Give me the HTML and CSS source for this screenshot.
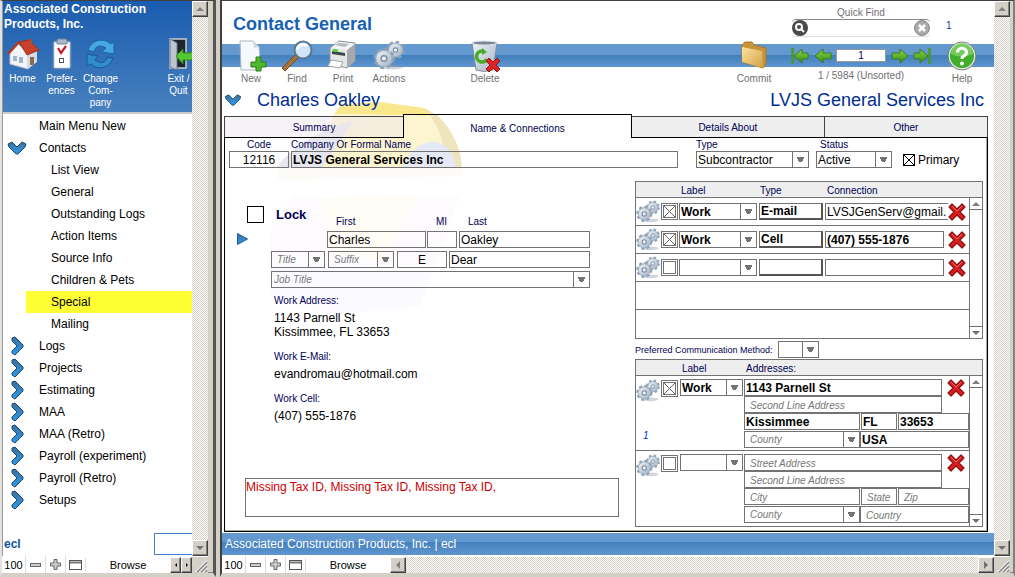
FILE: index.html
```html
<!DOCTYPE html>
<html lang="en">
<head>
    <meta charset="UTF-8">
    <meta name="viewport" content="width=device-width, initial-scale=1.0">
    <title>Contact General</title>
    <link rel="stylesheet" href="styles.css">
</head>
<body>
    <!-- shared icons -->
    <svg class="defs" width="0" height="0" aria-hidden="true">
        <defs>
            <linearGradient id="blue" x1="0" y1="0" x2="0" y2="1">
                <stop offset="0" stop-color="#3c6f9c"/>
                <stop offset="1" stop-color="#2f9be8"/>
            </linearGradient>
            <linearGradient id="green" x1="0" y1="0" x2="0" y2="1">
                <stop offset="0" stop-color="#8fd44a"/>
                <stop offset="1" stop-color="#2f8f10"/>
            </linearGradient>
            <linearGradient id="steel" x1="0" y1="0" x2="1" y2="1">
                <stop offset="0" stop-color="#eef2f6"/>
                <stop offset="1" stop-color="#a3b4c6"/>
            </linearGradient>
            <linearGradient id="gold" x1="0" y1="0" x2="1" y2="1">
                <stop offset="0" stop-color="#fbe3a0"/>
                <stop offset="1" stop-color="#d3a045"/>
            </linearGradient>
            <symbol id="chevron" viewBox="0 0 20 14">
                <path d="M1 3 L5 1 L10 6 L15 1 L19 3 L18 6 L11 13 L9 13 L2 6 Z" fill="url(#blue)" stroke="#1c4a78" stroke-width="1"/>
            </symbol>
            <symbol id="chevron-right" viewBox="0 0 14 20">
                <path d="M2 2 L5 1 L13 9 L13 11 L5 19 L2 17 L2 15 L7 10 L2 5 Z" fill="url(#blue)" stroke="#1c4a78" stroke-width="1"/>
            </symbol>
            <symbol id="gears" viewBox="0 0 32 32">
                <ellipse cx="19" cy="27" rx="11" ry="2.500" fill="#8a97a8" opacity=".4"/>
                <circle cx="22.500" cy="10" r="7.500" fill="#b4c3d2" stroke="#91a3b6" stroke-width="3.500" stroke-dasharray="3.200 2.690"/>
                <circle cx="22.500" cy="10" r="6.800" fill="url(#steel)" stroke="#9babbc" stroke-width=".8"/>
                <circle cx="22.500" cy="10" r="2.200" fill="#eef3f8" stroke="#7e91a5" stroke-width="1.200"/>
                <circle cx="11" cy="18.500" r="8.800" fill="#b4c3d2" stroke="#8fa1b4" stroke-width="3.800" stroke-dasharray="3.700 3.200"/>
                <circle cx="11" cy="18.500" r="8" fill="url(#steel)" stroke="#9babbc" stroke-width=".8"/>
                <circle cx="11" cy="18.500" r="2.800" fill="#eef3f8" stroke="#778b9f" stroke-width="1.400"/>
            </symbol>
            <symbol id="cross" viewBox="0 0 18 18">
                <path d="M4 1 L9 6 L14 1 L17 4 L12 9 L17 14 L14 17 L9 12 L4 17 L1 14 L6 9 L1 4 Z" fill="#d81e1e" stroke="#8c1212" stroke-width="1.2" stroke-linejoin="round"/>
                <path d="M4 3 L9 8 L14 3" fill="none" stroke="#f26a6a" stroke-width="1"/>
            </symbol>
            <symbol id="arrow" viewBox="0 0 18 16">
                <path d="M1 8 L9 1 L9 5 L17 5 L17 11 L9 11 L9 15 Z" fill="url(#green)" stroke="#3c7a24" stroke-width="1"/>
            </symbol>
            <symbol id="arrow-end" viewBox="0 0 18 16">
                <path d="M3 8 L11 1 L11 5 L17 5 L17 11 L11 11 L11 15 Z" fill="url(#green)" stroke="#3c7a24" stroke-width="1"/>
                <path d="M1.5 0 V16" stroke="#4a9a26" stroke-width="2.5"/>
            </symbol>
            <symbol id="minus" viewBox="0 0 11 11">
                <rect x=".5" y="4.5" width="10" height="3" fill="#ccc" stroke="#666"/>
            </symbol>
            <symbol id="plus" viewBox="0 0 11 11">
                <path d="M4 .5 H7 V4 H10.5 V7 H7 V10.5 H4 V7 H.5 V4 H4 Z" fill="#ccc" stroke="#666"/>
            </symbol>
            <symbol id="pane" viewBox="0 0 13 11">
                <rect x=".5" y="1.5" width="12" height="9" fill="#fff" stroke="#555"/>
                <path d="M1 3.5 H12" stroke="#777" stroke-width="2"/>
            </symbol>
            <symbol id="grip" viewBox="0 0 16 16">
                <path d="M5 15 L15 5 M9 15 L15 9 M13 15 L15 13" stroke="#808080" stroke-width="1.5"/>
                <path d="M3.5 15 L15 3.5 M7.5 15 L15 7.5 M11.5 15 L15 11.5" stroke="#fff" stroke-width="1"/>
            </symbol>
        </defs>
    </svg>

    <div class="app">
        <section class="window side-window">
            <div class="view">
                <aside class="sidebar">
                    <header class="side-header">
                        <h2>Associated Construction Products, Inc.</h2>
                        <div class="shortcuts">
                            <button class="shortcut">
                                <svg width="32" height="32" viewBox="0 0 32 32">
                                    <path d="M3 15 L3 26 L21 31 L21 15 L11 6 Z" fill="#f3f5f8" stroke="#b9c1cc"/>
                                    <path d="M21 15 L30 11 L30 24 L21 31 Z" fill="#d5dbe4"/>
                                    <path d="M22 2 L12 4 L20 17 L32 12 Z" fill="#c8402c" stroke="#a22e1c"/>
                                    <path d="M12 4 L1 16" stroke="#b8371f" stroke-width="2.5"/>
                                    <rect x="6" y="18" width="4" height="5" fill="#9fb4cd"/>
                                    <rect x="12" y="19" width="4" height="6" fill="#9fb4cd"/>
                                    <rect x="23" y="19" width="4" height="8" fill="#8b6a4a"/>
                                    <rect x="22" y="1" width="3" height="5" fill="#b04a34"/>
                                </svg>
                                <span>Home</span>
                            </button>
                            <button class="shortcut">
                                <svg width="32" height="32" viewBox="0 0 32 32">
                                    <rect x="7" y="3" width="18" height="28" rx="2" fill="#dfe8f4" stroke="#4d78b0" stroke-width="1.5"/>
                                    <rect x="9" y="6" width="14" height="23" fill="#fff"/>
                                    <rect x="11" y="1" width="10" height="5" rx="1" fill="#a9b8ca" stroke="#6c8099"/>
                                    <path d="M12 10 L15 15 L20 8" fill="none" stroke="#c41e2e" stroke-width="2.2"/>
                                    <rect x="13.500" y="20.500" width="4" height="4" fill="none" stroke="#555"/>
                                </svg>
                                <span>Prefer-<br>ences</span>
                            </button>
                            <button class="shortcut">
                                <svg width="32" height="32" viewBox="0 0 32 32">
                                    <path d="M3 12 C6 2 18 -1 26 6 L29 4 L29 16 L17 14 L21 10 C15 6 10 8 9 14 Z" fill="#47a8e0" stroke="#1a67a6"/>
                                    <path d="M28 20 C25 30 13 33 6 26 L2 28 L2 16 L13 18 L10 22 C16 26 21 25 22 19 Z" fill="#2f8dcc" stroke="#145a94"/>
                                </svg>
                                <span>Change<br>Com-<br>pany</span>
                            </button>
                            <button class="shortcut exit">
                                <svg width="32" height="32" viewBox="0 0 32 32">
                                    <path d="M7 1 H23 V30 H7 Z" fill="#20252c" stroke="#c6ccd4" stroke-width="1.5"/>
                                    <path d="M7 1 L14 5 V32 L7 29 Z" fill="#bcc5d0" stroke="#6f7a88"/>
                                    <path d="M13 18 L20 11 V15 H27 L31 12 V19 L28 22 H20 V26 Z" fill="#54c832" stroke="#2b8a16"/>
                                </svg>
                                <span>Exit /<br>Quit</span>
                            </button>
                        </div>
                    </header>
                    <nav>
                        <ul class="menu">
                            <li><i></i><a href="#">Main Menu New</a></li>
                            <li><i><svg width="20" height="14"><use href="#chevron"/></svg></i><a href="#">Contacts</a></li>
                            <li class="sub"><a href="#">List View</a></li>
                            <li class="sub"><a href="#">General</a></li>
                            <li class="sub"><a href="#">Outstanding Logs</a></li>
                            <li class="sub"><a href="#">Action Items</a></li>
                            <li class="sub"><a href="#">Source Info</a></li>
                            <li class="sub"><a href="#">Children &amp; Pets</a></li>
                            <li class="sub current"><a href="#">Special</a></li>
                            <li class="sub"><a href="#">Mailing</a></li>
                            <li><i><svg width="14" height="20"><use href="#chevron-right"/></svg></i><a href="#">Logs</a></li>
                            <li><i><svg width="14" height="20"><use href="#chevron-right"/></svg></i><a href="#">Projects</a></li>
                            <li><i><svg width="14" height="20"><use href="#chevron-right"/></svg></i><a href="#">Estimating</a></li>
                            <li><i><svg width="14" height="20"><use href="#chevron-right"/></svg></i><a href="#">MAA</a></li>
                            <li><i><svg width="14" height="20"><use href="#chevron-right"/></svg></i><a href="#">MAA (Retro)</a></li>
                            <li><i><svg width="14" height="20"><use href="#chevron-right"/></svg></i><a href="#">Payroll (experiment)</a></li>
                            <li><i><svg width="14" height="20"><use href="#chevron-right"/></svg></i><a href="#">Payroll (Retro)</a></li>
                            <li><i><svg width="14" height="20"><use href="#chevron-right"/></svg></i><a href="#">Setups</a></li>
                        </ul>
                    </nav>
                    <div class="side-footer">
                        <b>ecl</b>
                        <input type="text" aria-label="User">
                    </div>
                </aside>
                <div class="scrollbar"><button class="up" aria-label="Scroll up"></button><button class="down" aria-label="Scroll down"></button></div>
            </div>
            <div class="status">
                <span class="zoom">100</span>
                <button aria-label="Zoom out"><svg width="11" height="11"><use href="#minus"/></svg></button>
                <button aria-label="Zoom in"><svg width="11" height="11"><use href="#plus"/></svg></button>
                <button aria-label="Toggle toolbar"><svg width="13" height="11"><use href="#pane"/></svg></button>
                <span class="mode">Browse</span>
                <div class="hscroll narrow"><button class="left" aria-label="Scroll left"></button><button class="right" aria-label="Scroll right"></button></div>
                <svg width="16" height="16"><use href="#grip"/></svg>
            </div>
        </section>

        <section class="window main-window">
            <div class="view">
                <main class="content">
                    <header class="top">
                        <h1>Contact General</h1>
                        <div class="quick-find">
                            <label for="find">Quick Find</label>
                            <div class="find-box">
                                <svg width="16" height="16" viewBox="0 0 16 16"><circle cx="8" cy="8" r="8" fill="#4a4a4a"/><circle cx="7" cy="7" r="3" fill="none" stroke="#fff" stroke-width="2"/><path d="M9 9 L12 12" stroke="#fff" stroke-width="2"/></svg>
                                <input id="find" type="text">
                                <svg width="16" height="16" viewBox="0 0 16 16"><circle cx="8" cy="8" r="7.500" fill="#aaa" stroke="#888"/><path d="M5 5 L11 11 M11 5 L5 11" stroke="#fff" stroke-width="2.500"/></svg>
                            </div>
                        </div>
                        <span class="count">1</span>
                    </header>

                    <div class="toolbar">
                        <button class="tool">
                            <svg width="32" height="32" viewBox="0 0 32 32">
                                <path d="M5 1 H18 L24 7 L26 30 H6 Z" fill="#f6f9fc" stroke="#a9b6c4"/>
                                <path d="M18 1 L19 8 L24 7 Z" fill="#cfd9e4"/>
                                <path d="M21 17 H26 V22 H31 V27 H26 V31 H21 V27 H16 V22 H21 Z" fill="#4fb82c" stroke="#2c7d14"/>
                            </svg>
                            New
                        </button>
                        <button class="tool">
                            <svg width="32" height="32" viewBox="0 0 32 32">
                                <path d="M1 28 L14 15 L17 18 L4 31 Z" fill="#a8713a" stroke="#7a4d20"/>
                                <circle cx="22" cy="10" r="8.500" fill="#cfe5f7" stroke="#5d7893" stroke-width="2"/>
                                <path d="M16 10 C17 5 22 3 26 6" fill="none" stroke="#fff" stroke-width="2.500"/>
                            </svg>
                            Find
                        </button>
                        <button class="tool">
                            <svg width="32" height="32" viewBox="0 0 32 32">
                                <path d="M3 8 L12 1 L28 3 L28 21 L20 28 L3 24 Z" fill="#e4e6e8" stroke="#8d939a"/>
                                <path d="M20 10 L28 4 V21 L20 28 Z" fill="#a3a9af"/>
                                <path d="M4 8 L11 2 L27 4 L20 10 Z" fill="#f2f3f4"/>
                                <path d="M8 5 L12 3 L22 4 L18 7 Z" fill="#b5bac0"/>
                                <path d="M5 11 L18 13 V16 L5 14 Z" fill="#3f454d"/>
                                <path d="M6 10 L11 11" stroke="#4fd630" stroke-width="2.500"/>
                                <path d="M4 20 L16 22 L13 28 L1 26 Z" fill="#fff" stroke="#9aa"/>
                            </svg>
                            Print
                        </button>
                        <button class="tool">
                            <svg width="32" height="32"><use href="#gears"/></svg>
                            Actions
                        </button>
                        <button class="tool delete">
                            <svg width="32" height="32" viewBox="0 0 32 32">
                                <path d="M3 3 L28 3 L24 30 Q15 33 7 30 Z" fill="url(#steel)" stroke="#7d8b98"/>
                                <ellipse cx="15.500" cy="3" rx="12.500" ry="2" fill="#7b8793" stroke="#dfe6ec"/>
                                <path d="M13 11 A5.500 5.500 0 1 0 18 19" fill="none" stroke="#46ad27" stroke-width="3.500"/>
                                <path d="M13 8 L18 12 L13 15 Z" fill="#46ad27"/>
                                <path d="M20 18 L24 22 L28 18 L31 21 L27 25 L31 29 L28 32 L24 28 L20 32 L17 29 L21 25 L17 21 Z" fill="#dc2424" stroke="#951515"/>
                            </svg>
                            Delete
                        </button>
                        <button class="tool commit">
                            <svg width="32" height="32" viewBox="0 0 32 32">
                                <path d="M4 5 L7 2 H14 L16 5 L28 8 V24 L25 28 L4 22 Z" fill="#c79439" stroke="#a6772a"/>
                                <path d="M4 7 L24 11 L25 28 L4 22 Z" fill="url(#gold)"/>
                            </svg>
                            Commit
                        </button>
                        <div class="records">
                            <div class="record-nav">
                                <button aria-label="First"><svg width="18" height="16"><use href="#arrow-end"/></svg></button>
                                <button aria-label="Previous"><svg width="18" height="16"><use href="#arrow"/></svg></button>
                                <input type="text" value="1" aria-label="Record number">
                                <button class="flip" aria-label="Next"><svg width="18" height="16"><use href="#arrow"/></svg></button>
                                <button class="flip" aria-label="Last"><svg width="18" height="16"><use href="#arrow-end"/></svg></button>
                            </div>
                            <span>1 / 5984 (Unsorted)</span>
                        </div>
                        <button class="tool">
                            <svg width="32" height="32" viewBox="0 0 32 32">
                                <circle cx="16" cy="16" r="13" fill="#3fae2a" stroke="#dfe3e0" stroke-width="2"/>
                                <circle cx="16" cy="16" r="14" fill="none" stroke="#5a6a5a" stroke-width=".8"/>
                                <path d="M5 14 A11 11 0 0 1 27 14 Q16 19 5 14 Z" fill="#8ad873" opacity=".7"/>
                                <path d="M11.500 12.500 A4.500 4 0 1 1 17.500 16 Q16 17 16 19" fill="none" stroke="#fff" stroke-width="3.200"/>
                                <circle cx="16" cy="23.500" r="2" fill="#fff"/>
                            </svg>
                            Help
                        </button>
                    </div>

                    <div class="record">
                        <svg class="watermark" width="370" height="220" viewBox="0 0 370 220" aria-hidden="true">
                            <path d="M64 12 L72 2 L110 0 L154 6 L168 14 Z" fill="#fbe78c"/>
                            <path d="M64 12 L168 14 Q190 36 192 66 L44 66 Z" fill="#fcf5cf"/>
                            <path d="M154 6 L168 14 Q190 36 192 66 L175 66 Q176 30 154 6 Z" fill="#efe5bd"/>
                            <path d="M6 66 Q30 34 84 18 L52 66 Z" fill="#e6e6ee"/>
                            <path d="M132 66 Q144 38 166 40 Q184 44 186 66 Z" fill="#e6e9f4"/>
                            <path d="M8 66 H192 V74 L8 78 Z" fill="#fcfbf8"/>
                            <path d="M22 94 L176 94 L190 94 L166 160 L150 204 L60 214 L-6 190 L0 130 Z" fill="#fdfbfe"/>
                            <path d="M50 96 L150 94 L110 160 L64 152 Z" fill="#fffdf6"/>
                            <path d="M4 160 L160 174 L150 204 L60 204 L0 190 Z" fill="#fbfbff"/>
                        </svg>

                        <div class="name-row">
                            <svg width="18" height="12"><use href="#chevron"/></svg>
                            <h2>Charles Oakley</h2>
                            <h2 class="company">LVJS General Services Inc</h2>
                        </div>

                        <div class="tabs" role="tablist">
                            <button class="tab first" role="tab">Summary</button>
                            <button class="tab active" role="tab" aria-selected="true">Name &amp; Connections</button>
                            <button class="tab" role="tab">Details About</button>
                            <button class="tab" role="tab">Other</button>
                        </div>

                        <div class="panel">
                            <div class="summary">
                                <div class="field code"><label for="code">Code</label><input id="code" type="text" value="12116"></div>
                                <div class="field formal"><label for="formal">Company Or Formal Name</label><input id="formal" class="strong" type="text" value="LVJS General Services Inc"></div>
                                <div class="field type"><label for="type">Type</label><div class="combo"><select id="type"><option>Subcontractor</option></select></div></div>
                                <div class="field state"><label for="status">Status</label><div class="combo"><select id="status"><option>Active</option></select></div></div>
                                <label class="primary"><input type="checkbox" checked>Primary</label>
                            </div>

                            <div class="columns">
                                <div class="person">
                                    <div class="person-form">
                                        <div class="names">
                                            <div class="lock">
                                                <label><input type="checkbox">Lock</label>
                                                <svg width="11" height="12" viewBox="0 0 11 12"><path d="M.5 .5 L10.500 6 L.5 11.500 Z" fill="url(#blue)" stroke="#1c5c9c"/></svg>
                                            </div>
                                            <div class="field given"><label for="first">First</label><input id="first" type="text" value="Charles"></div>
                                            <div class="field middle"><label for="mi">MI</label><input id="mi" type="text"></div>
                                            <div class="field last"><label for="last">Last</label><input id="last" type="text" value="Oakley"></div>
                                        </div>
                                        <div class="titles">
                                            <div class="combo hint title"><select aria-label="Title"><option>Title</option></select></div>
                                            <div class="combo hint suffix"><select aria-label="Suffix"><option>Suffix</option></select></div>
                                            <input class="initial" type="text" value="E" aria-label="Gender">
                                            <input class="dear" type="text" value="Dear" aria-label="Salutation">
                                        </div>
                                        <div class="combo hint job"><select aria-label="Job Title"><option>Job Title</option></select></div>
                                        <dl class="details">
                                            <dt>Work Address:</dt>
                                            <dd>1143 Parnell St<br>Kissimmee, FL 33653</dd>
                                            <dt>Work E-Mail:</dt>
                                            <dd>evandromau@hotmail.com</dd>
                                            <dt>Work Cell:</dt>
                                            <dd>(407) 555-1876</dd>
                                        </dl>
                                    </div>
                                    <textarea class="missing" aria-label="Missing information">Missing Tax ID, Missing Tax ID, Missing Tax ID, </textarea>
                                </div>

                                <div class="contact">
                                    <div class="portal">
                                        <div class="portal-head connections-head"><span>Label</span><span>Type</span><span>Connection</span></div>
                                        <div class="portal-body">
                                            <div class="rows">
                                                <div class="row">
                                                    <svg width="24" height="24"><use href="#gears"/></svg>
                                                    <span class="tick"><input type="checkbox" checked aria-label="Use"></span>
                                                    <div class="combo strong kind"><select aria-label="Label"><option>Work</option></select></div>
                                                    <button class="medium">E-mail</button>
                                                    <input class="value long" type="text" value="LVSJGenServ@gmail." aria-label="Connection">
                                                    <button class="remove" aria-label="Remove"><svg width="18" height="18"><use href="#cross"/></svg></button>
                                                </div>
                                                <div class="row">
                                                    <svg width="24" height="24"><use href="#gears"/></svg>
                                                    <span class="tick"><input type="checkbox" checked aria-label="Use"></span>
                                                    <div class="combo strong kind"><select aria-label="Label"><option>Work</option></select></div>
                                                    <button class="medium">Cell</button>
                                                    <input class="value strong" type="text" value="(407) 555-1876" aria-label="Connection">
                                                    <button class="remove" aria-label="Remove"><svg width="18" height="18"><use href="#cross"/></svg></button>
                                                </div>
                                                <div class="row">
                                                    <svg width="24" height="24"><use href="#gears"/></svg>
                                                    <span class="tick"><input type="checkbox" aria-label="Use"></span>
                                                    <div class="combo kind"><select aria-label="Label"><option></option></select></div>
                                                    <button class="medium" aria-label="Type"></button>
                                                    <input class="value" type="text" aria-label="Connection">
                                                    <button class="remove" aria-label="Remove"><svg width="18" height="18"><use href="#cross"/></svg></button>
                                                </div>
                                                <div class="row"></div>
                                                <div class="row"></div>
                                            </div>
                                            <div class="portal-scroll"><button class="up" aria-label="Scroll up"></button><button class="down" aria-label="Scroll down"></button></div>
                                        </div>
                                    </div>

                                    <div class="preferred">
                                        <label for="method">Preferred Communication Method:</label>
                                        <div class="combo"><select id="method"><option></option></select></div>
                                    </div>

                                    <div class="portal">
                                        <div class="portal-head addresses-head"><span>Label</span><span>Addresses:</span></div>
                                        <div class="portal-body">
                                            <div class="rows">
                                                <div class="row address">
                                                    <div class="mark"><svg width="24" height="24"><use href="#gears"/></svg><em>1</em></div>
                                                    <span class="tick"><input type="checkbox" checked aria-label="Use"></span>
                                                    <div class="combo strong place"><select aria-label="Label"><option>Work</option></select></div>
                                                    <div class="lines">
                                                        <div class="line street">
                                                            <input class="strong" type="text" value="1143 Parnell St" aria-label="Street Address">
                                                            <button class="remove" aria-label="Remove"><svg width="18" height="18"><use href="#cross"/></svg></button>
                                                        </div>
                                                        <div class="line second"><input type="text" placeholder="Second Line Address" aria-label="Second Line Address"></div>
                                                        <div class="line city">
                                                            <input class="strong" type="text" value="Kissimmee" aria-label="City">
                                                            <input class="strong" type="text" value="FL" aria-label="State">
                                                            <input class="strong" type="text" value="33653" aria-label="Zip">
                                                        </div>
                                                        <div class="line county">
                                                            <div class="combo hint"><select aria-label="County"><option>County</option></select></div>
                                                            <input class="strong" type="text" value="USA" aria-label="Country">
                                                        </div>
                                                    </div>
                                                </div>
                                                <div class="row address">
                                                    <div class="mark"><svg width="24" height="24"><use href="#gears"/></svg></div>
                                                    <span class="tick"><input type="checkbox" aria-label="Use"></span>
                                                    <div class="combo place"><select aria-label="Label"><option></option></select></div>
                                                    <div class="lines">
                                                        <div class="line street">
                                                            <input type="text" placeholder="Street Address" aria-label="Street Address">
                                                            <button class="remove" aria-label="Remove"><svg width="18" height="18"><use href="#cross"/></svg></button>
                                                        </div>
                                                        <div class="line second"><input type="text" placeholder="Second Line Address" aria-label="Second Line Address"></div>
                                                        <div class="line city">
                                                            <input type="text" placeholder="City" aria-label="City">
                                                            <input type="text" placeholder="State" aria-label="State">
                                                            <input type="text" placeholder="Zip" aria-label="Zip">
                                                        </div>
                                                        <div class="line county">
                                                            <div class="combo hint"><select aria-label="County"><option>County</option></select></div>
                                                            <input type="text" placeholder="Country" aria-label="Country">
                                                        </div>
                                                    </div>
                                                </div>
                                            </div>
                                            <div class="portal-scroll"><button class="up" aria-label="Scroll up"></button><button class="down" aria-label="Scroll down"></button></div>
                                        </div>
                                    </div>
                                </div>
                            </div>
                        </div>
                    </div>

                    <footer class="band">Associated Construction Products, Inc. | ecl</footer>
                </main>
                <div class="scrollbar"><button class="up" aria-label="Scroll up"></button><button class="down" aria-label="Scroll down"></button></div>
            </div>
            <div class="status">
                <span class="zoom">100</span>
                <button aria-label="Zoom out"><svg width="11" height="11"><use href="#minus"/></svg></button>
                <button aria-label="Zoom in"><svg width="11" height="11"><use href="#plus"/></svg></button>
                <button aria-label="Toggle toolbar"><svg width="13" height="11"><use href="#pane"/></svg></button>
                <span class="mode">Browse</span>
                <div class="hscroll"><button class="left" aria-label="Scroll left"></button><button class="right" aria-label="Scroll right"></button></div>
                <svg width="16" height="16"><use href="#grip"/></svg>
            </div>
        </section>
    </div>
</body>
</html>
```
FILE: styles.css
```css
*, *::before, *::after {
    box-sizing: border-box;
}
body {
    margin: 0;
    background-color: #d4d0c8;
    font-family: "Liberation Sans", Arial, sans-serif;
    font-size: 12px;
    line-height: 14px;
    color: #000;
}
h1, h2, ul, dl, dd {
    margin: 0;
    padding: 0;
}
svg {
    display: block;
    flex: none;
}
.defs {
    position: absolute;
}
button {
    margin: 0;
    padding: 0;
    border: none;
    background: none;
    font: inherit;
    color: inherit;
}
input, select, textarea {
    margin: 0;
    border: 1px solid #737373;
    border-radius: 0;
    background-color: transparent;
    font: inherit;
    color: #000;
    min-width: 0;
    outline: none;
}
input[type="text"] {
    height: 17px;
    padding: 0 1px;
}
input::placeholder {
    padding-left: 4px;
    color: #777;
    font-size: 10px;
    font-style: italic;
    opacity: 1;
}
input.strong, .strong select {
    font-weight: bold;
}

/* windows */
.app {
    display: flex;
    min-height: 100vh;
}
.window {
    display: flex;
    flex-direction: column;
    border-top: 1px solid #404040;
    border-bottom: 4px solid #d4d0c8;
    box-shadow: inset 0 -1px #808080;
}
.side-window {
    flex: none;
    width: 216px;
    border-right: 3px solid #555;
    border-left: 2px solid #e4e2de;
    padding-right: 5px;
}
.main-window {
    flex: 1;
    min-width: 0;
    margin-left: 4px;
    border-left: 2px solid #404040;
    border-right: 2px solid #808080;
    padding-right: 3px;
}
.view {
    display: flex;
    flex: 1;
}
.scrollbar {
    display: flex;
    flex: none;
    flex-direction: column;
    justify-content: space-between;
    width: 16px;
}
.scrollbar, .hscroll {
    background: repeating-conic-gradient(#d4d0c8 0 25%, #fff 0 50%) 0 0 / 2px 2px;
}
.scrollbar button, .hscroll button {
    display: flex;
    align-items: center;
    justify-content: center;
    width: 16px;
    height: 16px;
    border: 1px solid;
    border-color: #fff #404040 #404040 #fff;
    background-color: #d4d0c8;
    box-shadow: inset -1px -1px #808080;
}
.up::before, .down::before, .left::before, .right::before {
    content: "";
    border: 4px solid transparent;
}
.up::before {
    border-top: 0;
    border-bottom-color: #808080;
}
.down::before {
    border-bottom: 0;
    border-top-color: #707070;
}
.left::before {
    border-left: 0;
    border-right-color: #808080;
}
.right::before {
    border-right: 0;
    border-left-color: #707070;
}

/* status bar */
.status {
    display: flex;
    align-items: center;
    height: 17px;
    background-color: #fff;
    font-size: 11px;
}
.status > svg {
    background-color: #d4d0c8;
}
.status > button {
    display: flex;
    align-items: center;
    justify-content: center;
    width: 20px;
    height: 17px;
    border-left: 1px solid #ddd;
}
.zoom {
    width: 23px;
    text-align: center;
}
.mode {
    width: 85px;
    border-left: 1px solid #ddd;
    text-align: center;
}
.hscroll {
    display: flex;
    flex: 1;
    justify-content: space-between;
}
.narrow button {
    width: 11px;
}
.narrow .left::before, .narrow .right::before {
    border-width: 2px;
}
.narrow .left::before {
    border-left: 0;
    border-right-color: #000;
}
.narrow .right::before {
    border-right: 0;
    border-left-color: #000;
}

/* sidebar */
.sidebar {
    display: flex;
    flex: 1;
    flex-direction: column;
    min-width: 0;
    border-left: 1px solid #999;
    background-color: #fff;
}
.side-header {
    height: 113px;
    border-bottom: 2px solid #ccc;
    background: linear-gradient(#1a5cb0, #4780bd);
    color: #fff;
    overflow: hidden;
}
.side-header h2 {
    padding: 1px 1px 6px;
    font-size: 12px;
    line-height: 15px;
}
.shortcuts {
    display: flex;
    align-items: flex-start;
}
.shortcut {
    display: flex;
    flex: none;
    flex-direction: column;
    align-items: center;
    gap: 3px;
    width: 39px;
    font-size: 10px;
    line-height: 12px;
}
.exit {
    margin-left: 39px;
}
.menu {
    padding-top: 1px;
    list-style: none;
}
.menu li {
    display: flex;
    align-items: center;
    height: 22px;
}
.menu i {
    display: flex;
    justify-content: center;
    width: 28px;
    margin-right: 8px;
}
.menu a {
    color: #000;
    text-decoration: none;
}
.menu .sub {
    margin-left: 23px;
    padding-left: 25px;
}
.menu .current {
    background-color: #ffff33;
}
.side-footer {
    display: flex;
    align-items: center;
    justify-content: space-between;
    margin-top: auto;
    padding: 0 0 1px 1px;
    color: #0f52a0;
}
.side-footer input[type="text"] {
    width: 38px;
    height: 22px;
    border-color: #4080c0;
    border-right: none;
}

/* header and toolbar */
.content {
    display: flex;
    flex: 1;
    flex-direction: column;
    min-width: 0;
    background-color: #fff;
}
.top {
    display: flex;
    height: 39px;
    padding: 0 9px 0 11px;
    color: #707070;
}
.top h1 {
    flex: 1;
    color: #1660b5;
    font-size: 18px;
    line-height: 46px;
}
.quick-find {
    width: 138px;
    padding-top: 5px;
    font-size: 10px;
    text-align: center;
}
.quick-find label {
    display: block;
    line-height: 13px;
}
.find-box {
    display: flex;
    align-items: center;
    height: 18px;
    border-top: 1px solid #888;
    border-bottom: 1px solid #ddd;
    border-radius: 4px;
}
.find-box input {
    flex: 1;
    border: none;
}
.count {
    width: 55px;
    padding: 18px 0 0 16px;
    color: #0a3a9a;
    font-size: 10px;
}
.toolbar {
    display: flex;
    padding: 0 9px 0 6px;
    background: linear-gradient(#6399cf 0 50%, #4280bd 50%, #6095cf) 0 4px / 100% 23px no-repeat;
    color: #707070;
    font-size: 10px;
}
.tool {
    display: flex;
    flex: none;
    flex-direction: column;
    align-items: center;
    width: 46px;
}
.delete {
    margin-left: 50px;
}
.commit {
    margin-left: auto;
}
.records {
    width: 140px;
    margin: 4px 8px 0 14px;
    line-height: 18px;
    text-align: center;
}
.record-nav {
    display: flex;
    align-items: center;
    justify-content: space-between;
    height: 23px;
}
.record-nav input[type="text"] {
    width: 50px;
    height: 13px;
    border-color: #999;
    background-color: #fff;
    color: #000066;
    text-align: center;
}
.flip {
    transform: scaleX(-1);
}

/* record */
.record {
    display: flex;
    flex: 1;
    flex-direction: column;
    position: relative;
    z-index: 0;
    padding: 0 6px 1px 2px;
}
.watermark {
    position: absolute;
    top: 16px;
    left: 48px;
    z-index: -1;
}
.name-row {
    display: flex;
    align-items: center;
    height: 28px;
    padding-right: 4px;
    color: #002d93;
}
.name-row h2 {
    margin-left: 15px;
    font-size: 18px;
    font-weight: normal;
}
.name-row .company {
    margin-left: auto;
}
.tabs {
    display: flex;
    align-items: flex-end;
    height: 24px;
    color: #000055;
    font-size: 10px;
}
.tab {
    flex: 193;
    height: 22px;
    padding-top: 2px;
    border: 1px solid #444;
    border-bottom-color: #000;
    border-left: none;
    background-color: #eee;
}
.tab:last-child {
    flex: 163;
}
.tab.first {
    flex: 179;
    border-left: 1px solid #444;
    border-right: none;
    background-color: rgba(238, 230, 238, 0.5);
}
.tab.active {
    flex: 228;
    height: 24px;
    padding-top: 4px;
    border: 1px solid #000;
    border-bottom: none;
    background: none;
}
.panel {
    flex: 1;
    padding: 1px 4px 4px;
    border: 1px solid #000;
    border-top: none;
    box-shadow: inset -1px -1px #aaa;
}
.field {
    display: flex;
    flex-direction: column;
}
.field label {
    color: #000055;
    font-size: 10px;
    line-height: 12px;
}
.combo {
    position: relative;
    height: 17px;
}
.combo select {
    display: block;
    width: 100%;
    height: 17px;
    padding: 0 16px 0 1px;
    appearance: none;
}
.combo::after {
    content: "";
    position: absolute;
    top: 0;
    right: 0;
    width: 17px;
    height: 17px;
    border: 1px solid #737373;
    background: linear-gradient(#737373, #737373) 4px 5px / 7px 2px no-repeat, linear-gradient(#737373, #737373) 5px 7px / 5px 2px no-repeat, linear-gradient(#737373, #737373) 6px 9px / 3px 1px no-repeat;
    pointer-events: none;
}
.hint select {
    padding-left: 5px;
    color: #777;
    font-size: 10px;
    font-style: italic;
}
.summary {
    display: flex;
    align-items: flex-end;
}
.code {
    width: 60px;
    margin-right: 2px;
    text-align: center;
}
.code input {
    text-align: center;
}
.formal {
    flex: 1;
    margin-right: 18px;
}
.type {
    width: 113px;
    margin-right: 7px;
}
.state {
    width: 76px;
    margin-right: 11px;
}
.state label {
    padding-left: 4px;
}
.primary {
    display: flex;
    align-items: center;
    gap: 3px;
    width: 80px;
    height: 17px;
}

/* checkboxes with a thin X */
input[type="checkbox"] {
    flex: none;
    width: 12px;
    height: 12px;
    border-color: #000;
    appearance: none;
}
input[type="checkbox"]:checked {
    background:
        linear-gradient(45deg, transparent 46%, currentColor 46% 54%, transparent 54%),
        linear-gradient(-45deg, transparent 46%, currentColor 46% 54%, transparent 54%);
}
.tick {
    display: flex;
    flex: none;
    align-items: center;
    justify-content: center;
    width: 17px;
    height: 17px;
    border: 1px solid #737373;
}
.tick input[type="checkbox"] {
    width: 13px;
    height: 13px;
    border-color: #737373;
    color: #666;
}

/* person */
.columns {
    display: flex;
    margin-top: 13px;
}
.person {
    display: flex;
    flex: 1;
    flex-direction: column;
    min-width: 0;
}
.person-form {
    padding: 25px 45px 0 8px;
}
.names {
    display: flex;
    align-items: flex-end;
}
.names .field {
    gap: 3px;
}
.names .field label {
    padding-left: 9px;
}
.lock {
    flex: none;
    width: 90px;
}
.lock label {
    display: flex;
    align-items: center;
    gap: 12px;
    padding-left: 10px;
    margin-bottom: 10px;
    color: #000055;
    font-size: 13px;
    font-weight: bold;
}
.lock input[type="checkbox"] {
    width: 17px;
    height: 17px;
}
.lock svg {
    margin-bottom: 3px;
}
.given {
    flex: none;
    width: 99px;
    margin-right: 1px;
}
.middle {
    flex: none;
    width: 30px;
    margin-right: 2px;
}
.last {
    flex: 1;
    min-width: 0;
}
.titles {
    display: flex;
    margin: 3px 0 3px 34px;
}
.title {
    width: 54px;
    margin-right: 3px;
}
.suffix {
    width: 66px;
    margin-right: 3px;
}
.initial {
    width: 50px;
    margin-right: 2px;
    text-align: center;
}
.dear {
    flex: 1;
}
.job {
    margin-left: 34px;
}
.job select {
    padding-left: 2px;
}
.details {
    margin: 7px 0 0 37px;
}
.details dt {
    margin-bottom: 4px;
    color: #000055;
    font-size: 10px;
    line-height: 12px;
}
.details dd {
    margin-bottom: 12px;
}
.missing {
    height: 39px;
    margin: 43px 16px 0;
    padding: 1px 0;
    color: #cc0000;
    resize: none;
    overflow: hidden;
}

/* portals */
.contact {
    flex: none;
    width: 348px;
}
.portal {
    border: 1px solid #737373;
    background-color: #fff;
}
.portal-head {
    display: grid;
    height: 16px;
    border-bottom: 1px solid #737373;
    background-color: #eee;
    color: #000055;
    font-size: 10px;
    line-height: 17px;
}
.connections-head {
    grid-template-columns: 79px 67px 1fr;
    padding-left: 45px;
}
.addresses-head {
    grid-template-columns: 64px 1fr;
    padding-left: 46px;
}
.portal-body {
    display: flex;
}
.rows {
    flex: 1;
    min-width: 0;
}
.row {
    display: flex;
    align-items: center;
    height: 28px;
    border-bottom: 1px solid #737373;
}
.row:last-child {
    border-bottom: none;
}
.row .tick {
    margin: 0 1px;
}
.kind {
    width: 78px;
    margin-right: 2px;
}
.medium {
    width: 64px;
    height: 17px;
    margin-right: 2px;
    padding-left: 1px;
    border: 1px solid #737373;
    border-right: 2px solid #555;
    border-bottom: 2px solid #555;
    font-weight: bold;
    text-align: left;
}
.value {
    width: 119px;
    margin-right: 4px;
}
.value.long {
    width: 123px;
    margin-right: 0;
    border-right: none;
}
.portal-scroll {
    display: flex;
    flex-direction: column;
    justify-content: space-between;
    width: 13px;
    border-left: 1px solid #737373;
}
.portal-scroll button {
    display: flex;
    align-items: center;
    justify-content: center;
    height: 12px;
}
.portal-scroll .up {
    border-bottom: 1px solid #737373;
}
.portal-scroll .down {
    border-top: 1px solid #737373;
}
.preferred {
    display: flex;
    align-items: center;
    margin: 2px 0 1px;
    color: #000055;
    font-size: 9px;
}
.preferred label {
    width: 143px;
    white-space: nowrap;
}
.preferred .combo {
    width: 41px;
}
.row.address {
    align-items: flex-start;
    height: 75px;
    padding-top: 3px;
}
.address .tick {
    margin-top: 1px;
}
.mark em {
    display: block;
    margin: 26px 0 0 7px;
    color: #0033bb;
    font-size: 10px;
}
.place {
    width: 63px;
    margin: 0 1px;
}
.lines {
    display: flex;
    flex: 1;
    flex-direction: column;
    min-width: 0;
}
.line {
    display: grid;
    height: 17px;
}
.street {
    grid-template-columns: 198px 18px;
    gap: 5px;
}
.second {
    grid-template-columns: 198px;
}
.city {
    grid-template-columns: 116px 36px 1fr;
    gap: 1px;
}
.county {
    grid-template-columns: 116px 1fr;
    margin-top: 1px;
}

.band {
    height: 22px;
    margin-bottom: 1px;
    padding-left: 3px;
    background: linear-gradient(#6399cf 0 40%, #4280bd 40%, #6095cf);
    color: #fff;
    line-height: 23px;
}
```
